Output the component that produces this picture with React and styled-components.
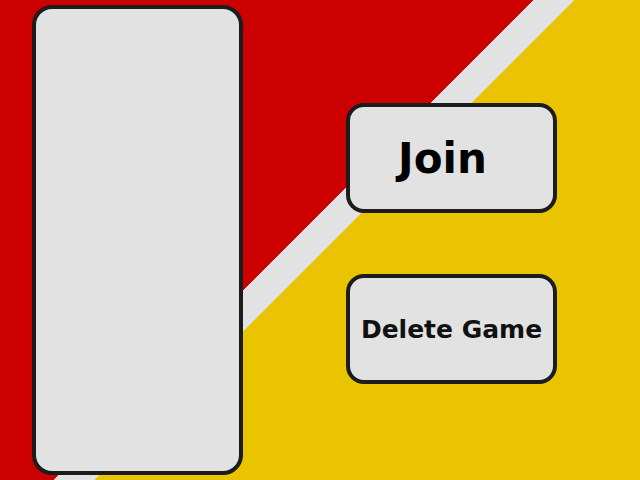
import React from "react";
import styled, { createGlobalStyle } from "styled-components";

const Global = createGlobalStyle`
  html, body { margin: 0; padding: 0; }
  body {
    width: 640px;
    height: 480px;
    overflow: hidden;
    font-family: "DejaVu Sans", Verdana, sans-serif;
  }
`;

const Scene = styled.div`
  width: 640px;
  height: 480px;
  box-sizing: border-box;
  padding: 5px 0 0 32px;
  display: flex;
  gap: 103px;
  background: linear-gradient(
    135deg,
    #cc0000 0px,
    #cc0000 377px,
    #e2e2e2 377px,
    #e2e2e2 406px,
    #ebc400 406px
  );
`;

const SidePanel = styled.div`
  width: 211px;
  height: 470px;
  box-sizing: border-box;
  background: #e2e2e2;
  border: 4px solid #1c1c1c;
  border-radius: 20px;
`;

const Actions = styled.div`
  display: flex;
  flex-direction: column;
  gap: 61px;
  padding-top: 98px;
`;

const ActionButton = styled.button`
  width: 211px;
  height: 110px;
  box-sizing: border-box;
  background: #e2e2e2;
  border: 4px solid #1c1c1c;
  border-radius: 18px;
  display: flex;
  align-items: center;
  justify-content: center;
  padding: 0 ${(p) => (p.$shift ? p.$shift * 2 : 0)}px 0 0;
  font-family: "DejaVu Sans", Verdana, sans-serif;
  font-weight: bold;
  font-size: ${(p) => p.$size}px;
  color: ${(p) => p.$color};
  cursor: pointer;
`;

export default function App() {
  return (
    <>
      <Global />
      <Scene>
        <SidePanel />
        <Actions>
          <ActionButton $size={42} $shift={9} $color="#000">
            Join
          </ActionButton>
          <ActionButton $size={25} $color="#111">
            Delete Game
          </ActionButton>
        </Actions>
      </Scene>
    </>
  );
}
